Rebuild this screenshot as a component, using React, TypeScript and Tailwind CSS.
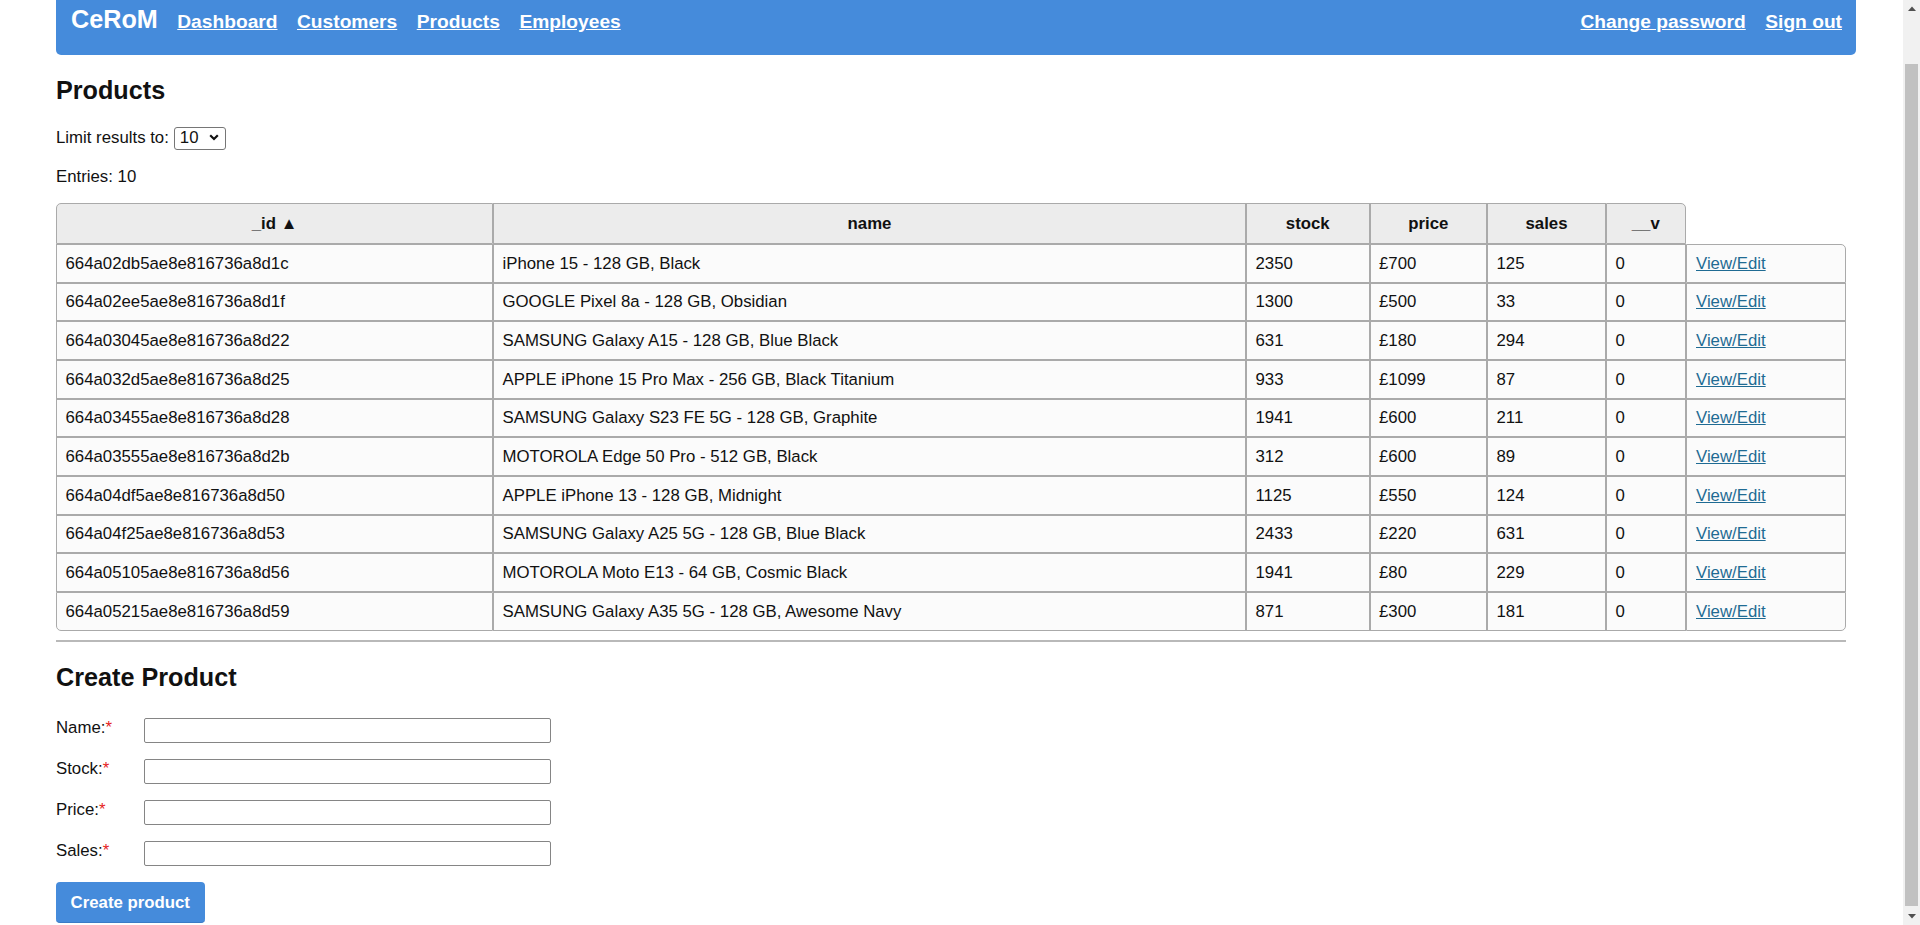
import { useState } from "react";

interface Product {
  id: string;
  name: string;
  stock: number;
  price: number;
  sales: number;
  v: number;
}

const products: Product[] = [
  { id: "664a02db5ae8e816736a8d1c", name: "iPhone 15 - 128 GB, Black", stock: 2350, price: 700, sales: 125, v: 0 },
  { id: "664a02ee5ae8e816736a8d1f", name: "GOOGLE Pixel 8a - 128 GB, Obsidian", stock: 1300, price: 500, sales: 33, v: 0 },
  { id: "664a03045ae8e816736a8d22", name: "SAMSUNG Galaxy A15 - 128 GB, Blue Black", stock: 631, price: 180, sales: 294, v: 0 },
  { id: "664a032d5ae8e816736a8d25", name: "APPLE iPhone 15 Pro Max - 256 GB, Black Titanium", stock: 933, price: 1099, sales: 87, v: 0 },
  { id: "664a03455ae8e816736a8d28", name: "SAMSUNG Galaxy S23 FE 5G - 128 GB, Graphite", stock: 1941, price: 600, sales: 211, v: 0 },
  { id: "664a03555ae8e816736a8d2b", name: "MOTOROLA Edge 50 Pro - 512 GB, Black", stock: 312, price: 600, sales: 89, v: 0 },
  { id: "664a04df5ae8e816736a8d50", name: "APPLE iPhone 13 - 128 GB, Midnight", stock: 1125, price: 550, sales: 124, v: 0 },
  { id: "664a04f25ae8e816736a8d53", name: "SAMSUNG Galaxy A25 5G - 128 GB, Blue Black", stock: 2433, price: 220, sales: 631, v: 0 },
  { id: "664a05105ae8e816736a8d56", name: "MOTOROLA Moto E13 - 64 GB, Cosmic Black", stock: 1941, price: 80, sales: 229, v: 0 },
  { id: "664a05215ae8e816736a8d59", name: "SAMSUNG Galaxy A35 5G - 128 GB, Awesome Navy", stock: 871, price: 300, sales: 181, v: 0 },
];

function Navbar() {
  return (
    <nav className="flex h-[55px] w-[1800px] items-baseline justify-between rounded-b-[5px] bg-[#458bdb] pl-[15px] pr-[14px] pt-[5px] text-white">
      <div className="flex items-baseline gap-[19.5px]">
        <span className="text-[25.2px] font-bold leading-[29px]">CeRoM</span>
        <a href="#" className="text-[19.2px] font-bold leading-[22px] underline">Dashboard</a>
        <a href="#" className="text-[19.2px] font-bold leading-[22px] underline">Customers</a>
        <a href="#" className="text-[19.2px] font-bold leading-[22px] underline">Products</a>
        <a href="#" className="text-[19.2px] font-bold leading-[22px] underline">Employees</a>
      </div>
      <div className="flex items-baseline gap-[19.5px]">
        <a href="#" className="text-[19.2px] font-bold leading-[22px] underline">Change password</a>
        <a href="#" className="text-[19.2px] font-bold leading-[22px] underline">Sign out</a>
      </div>
    </nav>
  );
}

function ProductsTable() {
  const th = "h-[40.7px] border border-[#aaaaaa] bg-[#ececec] px-[8.5px] text-center font-bold";
  const td = "h-[38.7px] border border-[#aaaaaa] bg-[#fbfbfb] px-[8.5px] align-middle";
  const last = products.length - 1;

  return (
    <table className="w-[1790px] table-fixed border-separate border-spacing-0 leading-[19.3px]">
      <colgroup>
        <col className="w-[437px]" />
        <col className="w-[753px]" />
        <col className="w-[123.5px]" />
        <col className="w-[117.5px]" />
        <col className="w-[119px]" />
        <col className="w-[79.5px]" />
        <col className="w-[160.5px]" />
      </colgroup>
      <thead>
        <tr>
          <th className={`${th} rounded-tl-[5px]`}>_id ▲</th>
          <th className={th}>name</th>
          <th className={th}>stock</th>
          <th className={th}>price</th>
          <th className={th}>sales</th>
          <th className={`${th} rounded-tr-[5px]`}>__v</th>
        </tr>
      </thead>
      <tbody>
        {products.map((p, i) => (
          <tr key={p.id}>
            <td className={`${td} ${i === last ? "rounded-bl-[5px]" : ""}`}>{p.id}</td>
            <td className={td}>{p.name}</td>
            <td className={td}>{p.stock}</td>
            <td className={td}>£{p.price}</td>
            <td className={td}>{p.sales}</td>
            <td className={td}>{p.v}</td>
            <td
              className={`${td} ${i === 0 ? "rounded-tr-[5px]" : ""} ${
                i === last ? "rounded-br-[5px]" : ""
              }`}
            >
              <a href="#" className="pl-[1px] text-[#1f6b93] underline">
                View/Edit
              </a>
            </td>
          </tr>
        ))}
      </tbody>
    </table>
  );
}

function FormRow({ label }: { label: string }) {
  return (
    <div className="flex items-start">
      <label className="-mt-[0.5px] w-[87.5px] leading-[19.3px]">
        {label}:<span className="text-[#e52222]">*</span>
      </label>
      <input className="h-[25px] w-[407px] rounded-[2px] border border-[#858585] bg-white px-[3px]" />
    </div>
  );
}

// window scrollbar as in the screenshot (page scrolled a little)
function Scrollbar() {
  return (
    <div className="flex h-[925px] w-[17px] shrink-0 flex-col items-center bg-[#f1f1f1]">
      <div className="flex h-[17px] w-full items-center justify-center">
        <svg width="8" height="5" viewBox="0 0 8 5">
          <path d="M0 5L4 0.5L8 5Z" fill="#505050" />
        </svg>
      </div>
      <div className="mt-[47px] h-[842px] w-[13px] bg-[#c1c1c1]" />
      <div className="mt-auto flex h-[17px] w-full items-center justify-center">
        <svg width="8" height="5" viewBox="0 0 8 5">
          <path d="M0 0L4 4.5L8 0Z" fill="#505050" />
        </svg>
      </div>
    </div>
  );
}

export default function App() {
  const [limit, setLimit] = useState("10");

  return (
    <div className="flex h-[925px] overflow-hidden bg-white text-[16.8px] text-[#111] [font-family:'Liberation_Sans',Arial,sans-serif]">
      <div className="h-[925px] flex-1 overflow-hidden pl-[56px]">
        <Navbar />

        <h2 className="mt-[21px] text-[25.2px] font-bold leading-[29px]">Products</h2>

        <div className="mt-[21px] flex h-[23.4px] items-center gap-[5px]">
          <span className="leading-[19.3px]">Limit results to:</span>
          <div className="relative">
            <select
              value={limit}
              onChange={(e) => setLimit(e.target.value)}
              className="h-[23.4px] w-[52.5px] appearance-none rounded-[3px] border border-[#767676] bg-white pl-[5px] leading-none"
            >
              <option value="5">5</option>
              <option value="10">10</option>
              <option value="25">25</option>
              <option value="50">50</option>
            </select>
            <svg
              className="pointer-events-none absolute right-[7px] top-[9px]"
              width="10"
              height="7"
              viewBox="0 0 10 7"
              fill="none"
            >
              <path d="M1.2 1.2L5 5L8.8 1.2" stroke="#111" strokeWidth="2.2" />
            </svg>
          </div>
        </div>

        <p className="mt-[17.4px] leading-[19.3px]">Entries: 10</p>

        <div className="mt-[17.2px]">
          <ProductsTable />
        </div>

        <div className="mt-[9px] h-[2px] w-[1790px] bg-[#b9b9b9]" />

        <h2 className="mt-[21px] text-[25.2px] font-bold leading-[29px]">Create Product</h2>

        <form className="mt-[26.5px] flex flex-col gap-[16px]" onSubmit={(e) => e.preventDefault()}>
          <FormRow label="Name" />
          <FormRow label="Stock" />
          <FormRow label="Price" />
          <FormRow label="Sales" />
          <div>
            <button
              type="submit"
              className="h-[41px] w-[148.5px] rounded-[4px] border-b border-[#3a7bc6] bg-[#458bdb] font-bold text-white"
            >
              Create product
            </button>
          </div>
        </form>
      </div>
      <Scrollbar />
    </div>
  );
}
